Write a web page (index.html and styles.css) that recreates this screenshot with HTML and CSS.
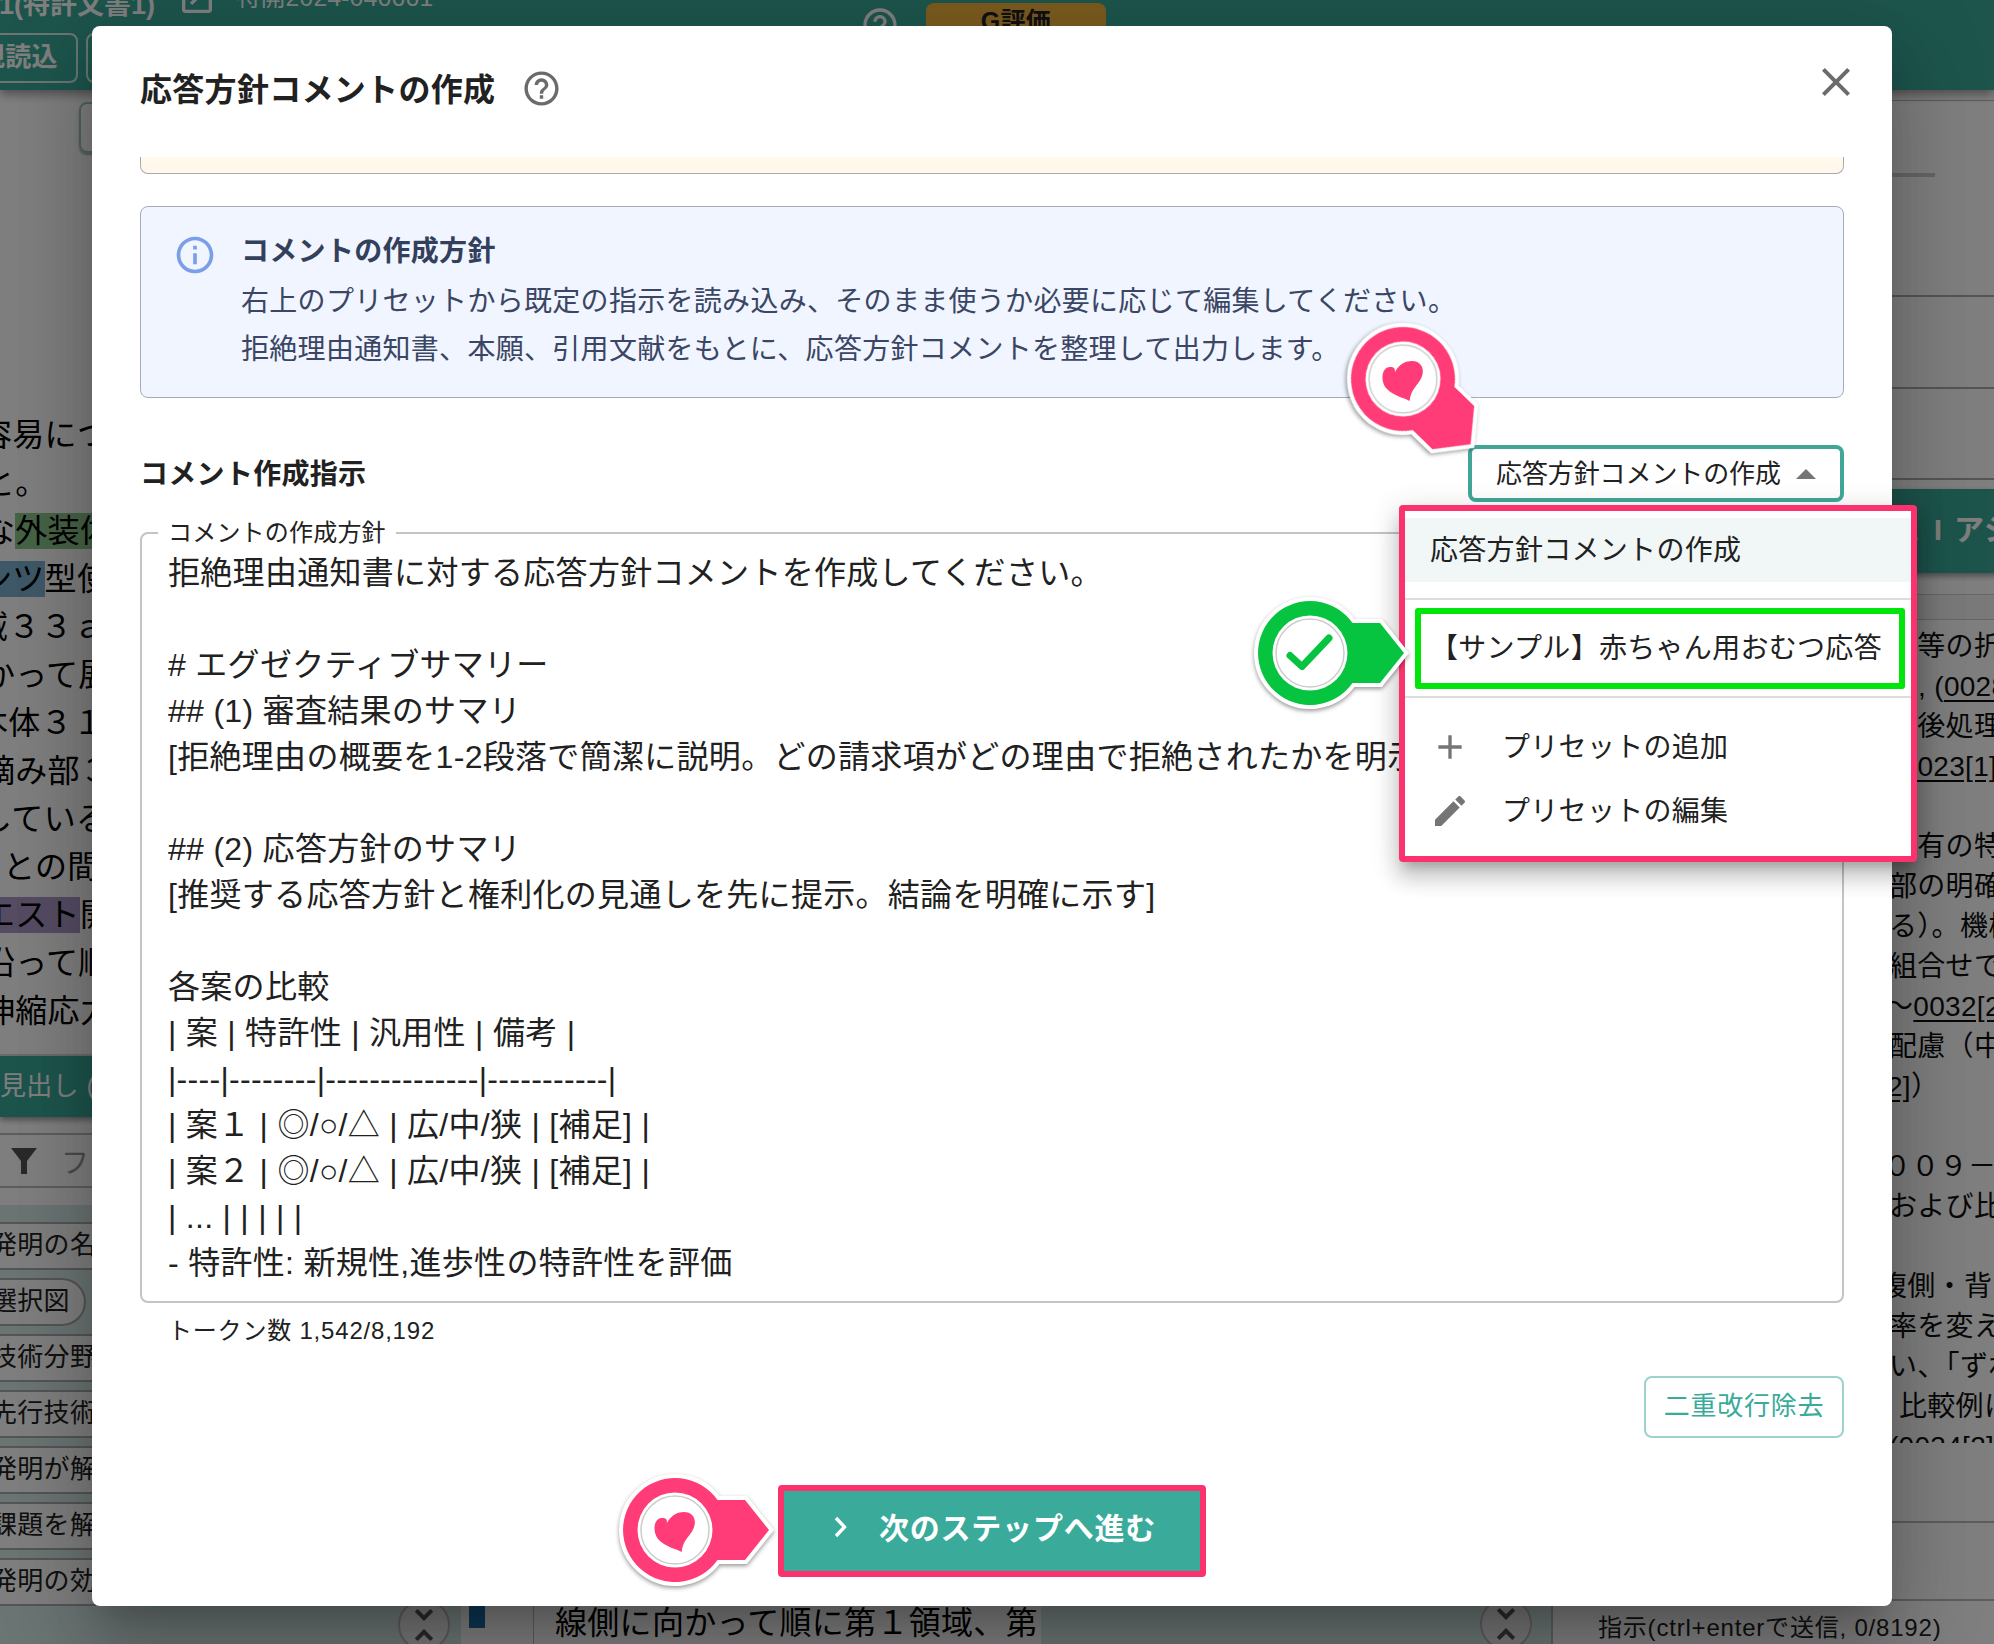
FILE: index.html
```html
<!DOCTYPE html>
<html lang="ja">
    <head>
        <meta charset="UTF-8" />
        <meta name="viewport" content="width=device-width, initial-scale=1.0" />
        <title>応答方針コメントの作成</title>
        <link rel="stylesheet" href="styles.css">
    </head>

    <body>
        <!-- アイコン・マーカーの定義 -->
        <svg class="defs" width="0" height="0">
            <symbol id="icon-help" viewBox="0 0 24 24">
                <path d="M11 18h2v-2h-2v2zm1-16C6.48 2 2 6.48 2 12s4.48 10 10 10 10-4.48 10-10S17.52 2 12 2zm0 18c-4.41 0-8-3.59-8-8s3.59-8 8-8 8 3.59 8 8-3.59 8-8 8zm0-14c-2.21 0-4 1.79-4 4h2c0-1.1.9-2 2-2s2 .9 2 2c0 2-3 1.75-3 5h2c0-2.25 3-2.5 3-5 0-2.21-1.79-4-4-4z" />
            </symbol>
            <symbol id="icon-unfold" viewBox="0 0 24 24">
                <path d="M7.41 18.59 8.83 20 12 16.83 15.17 20l1.41-1.41L12 14l-4.59 4.59zm9.18-13.18L15.17 4 12 7.17 8.83 4 7.41 5.41 12 10l4.59-4.59z" />
            </symbol>
            <symbol id="pin" viewBox="-60 -60 164 124">
                <path class="pin-edge" d="M42.500 -30H70L94 0L70 30H42.500A52 52 0 1 1 42.500 -30Z" />
                <path d="M42.500 -30H70L94 0L70 30H42.500A52 52 0 1 1 42.500 -30Z" />
                <circle class="pin-hole" r="37.500" />
                <circle class="pin-ring" r="34" />
            </symbol>
            <symbol id="heart" viewBox="-26 -26 52 52">
                <path d="M6.700 22C2 19 -10 17 -17 9C-23 1 -21 -12 -13 -12C-9 -12 -8 -11 -8 -7C-4 -15 3 -18 9 -18C17 -18 21 -12 19.600 -5C17 6 8 8 6.700 22Z" />
            </symbol>
        </svg>

        <div class="app">
            <div class="header">
                <div class="header-top">
                    <span class="doc-name">1(特許文書1)</span>
                    <svg class="open-icon" width="40" height="40" viewBox="0 0 24 24"><path d="M19 19H5V5h7V3H5a2 2 0 0 0-2 2v14c0 1.100.89 2 2 2h14c1.100 0 2-.9 2-2v-7h-2v7zM14 3v2h3.590l-9.830 9.830 1.410 1.410L19 6.410V10h2V3h-7z" /></svg>
                    <span class="doc-no">特開2024-046661</span>
                </div>
                <div class="header-bottom">
                    <span class="header-btn">規読込</span>
                    <span class="header-btn next"></span>
                </div>
                <svg class="header-help" width="40" height="40"><use href="#icon-help" /></svg>
                <span class="rating">G評価</span>
            </div>

            <div class="main">
                <div class="side">
                    <div class="side-tools"><span class="small-btn"></span></div>
                    <div class="reading">
                        <p>容易につ</p>
                        <p>と。</p>
                        <p>な<mark class="green">外装体</mark></p>
                        <p><mark class="blue">ンツ</mark>型使</p>
                        <p>域３３ａ</p>
                        <p>かって展</p>
                        <p>本体３１</p>
                        <p>摘み部３</p>
                        <p>している</p>
                        <p>との間</p>
                        <p><mark class="purple">エスト</mark>開</p>
                        <p>沿って順</p>
                        <p>伸縮応力</p>
                    </div>
                    <div class="side-title">見出し (</div>
                    <div class="filter">
                        <svg width="26" height="26" viewBox="0 0 26 26"><path d="M0 0H26L16 13V26H10V13Z" /></svg>
                        <span>フィルタ</span>
                    </div>
                    <div class="outline">
                        <span class="chip">発明の名称</span>
                        <span class="chip short">選択図</span>
                        <span class="chip">技術分野</span>
                        <span class="chip">先行技術文献</span>
                        <span class="chip">発明が解決</span>
                        <span class="chip">課題を解決</span>
                        <span class="chip">発明の効果</span>
                        <span class="fold"><svg width="52" height="52"><use href="#icon-unfold" /></svg></span>
                    </div>
                </div>
                <div class="document">
                    <div class="mark-rail"><i></i></div>
                    <div class="document-text">線側に向かって順に第１領域、第２</div>
                </div>
                <div class="figures">
                    <span class="fold"><svg width="52" height="52"><use href="#icon-unfold" /></svg></span>
                </div>
                <div class="assistant">
                    <div class="form-lines">
                        <i class="bar"></i>
                    </div>
                    <div class="assistant-title">Ａ<span>I</span>アシ</div>
                    <div class="assistant-tab"></div>
                    <div class="answer">
                        <p>部、前等</p>
                        <p>を等の折</p>
                        <p>], (<u>0028</u></p>
                        <p>の後処理</p>
                        <p>(<u>0023[1]</u></p>
                        <p></p>
                        <p>固有の特</p>
                        <p>部の明確</p>
                        <p>る）。機械</p>
                        <p>組合せで</p>
                        <p>〜<u>0032[2]</u></p>
                        <p>配慮（中</p>
                        <p><u>2]</u>）</p>
                        <p></p>
                        <p>００９－</p>
                        <p>および比</p>
                        <p></p>
                        <p>腹側・背</p>
                        <p>率を変え</p>
                        <p>い、「ずれ</p>
                        <p>比較例に</p>
                        <p>(0034[2]</p>
                    </div>
                    <div class="prompt"></div>
                    <div class="prompt-hint">指示(ctrl+enterで送信, 0/8192)</div>
                </div>
            </div>
        </div>

        <div class="backdrop">
            <div class="dialog">
                <div class="dialog-title">
                    <h2>応答方針コメントの作成</h2>
                    <svg class="help" width="41" height="41"><use href="#icon-help" /></svg>
                    <svg class="close" width="48" height="48" viewBox="0 0 24 24"><path d="M19 6.410 17.590 5 12 10.590 6.410 5 5 6.410 10.590 12 5 17.590 6.410 19 12 13.410 17.590 19 19 17.590 13.410 12z" /></svg>
                </div>
                <div class="dialog-content">
                    <div class="warning"></div>
                    <div class="info">
                        <svg width="44" height="44" viewBox="0 0 24 24"><path d="M11 7h2v2h-2zm0 4h2v6h-2zm1-9C6.480 2 2 6.480 2 12s4.480 10 10 10 10-4.480 10-10S17.520 2 12 2zm0 18c-4.410 0-8-3.590-8-8s3.590-8 8-8 8 3.590 8 8-3.590 8-8 8z" /></svg>
                        <div>
                            <h3>コメントの作成方針</h3>
                            <p>右上のプリセットから既定の指示を読み込み、そのまま使うか必要に応じて編集してください。</p>
                            <p>拒絶理由通知書、本願、引用文献をもとに、応答方針コメントを整理して出力します。</p>
                        </div>
                    </div>
                    <div class="field-head">
                        <h3>コメント作成指示</h3>
                        <div class="select">
                            <span>応答方針コメントの作成</span>
                            <i class="arrow"></i>
                        </div>
                    </div>
                    <fieldset class="editor">
                        <legend>コメントの作成方針</legend>
                        <div class="editor-text">拒絶理由通知書に対する応答方針コメントを作成してください。

# エグゼクティブサマリー
## (1) 審査結果のサマリ
[拒絶理由の概要を1-2段落で簡潔に説明。どの請求項がどの理由で拒絶されたかを明示]

## (2) 応答方針のサマリ
[推奨する応答方針と権利化の見通しを先に提示。結論を明確に示す]

各案の比較
| 案 | 特許性 | 汎用性 | 備考 |
|----|--------|--------------|-----------|
| 案１ | ◎/○/△ | 広/中/狭 | [補足] |
| 案２ | ◎/○/△ | 広/中/狭 | [補足] |
| ... | | | | |
- 特許性: 新規性,進歩性の特許性を評価</div>
                    </fieldset>
                    <div class="token">トークン数 1,542/8,192</div>
                    <div class="tools"><span class="outline-btn">二重改行除去</span></div>
                </div>
                <div class="dialog-actions">
                    <div class="next-btn">
                        <svg width="14" height="22" viewBox="0 0 14 22"><path d="M2 2L10.500 11L2 20" /></svg>
                        <span>次のステップへ進む</span>
                    </div>
                </div>
            </div>
        </div>

        <div class="menu">
            <div class="menu-item selected">応答方針コメントの作成</div>
            <div class="sample"><div class="menu-item">【サンプル】赤ちゃん用おむつ応答</div></div>
            <div class="menu-item with-icon">
                <svg width="40" height="40" viewBox="0 0 24 24"><path d="M19 13h-6v6h-2v-6H5v-2h6V5h2v6h6v2z" /></svg>
                <span>プリセットの追加</span>
            </div>
            <div class="menu-item with-icon">
                <svg width="40" height="40" viewBox="0 0 24 24"><path d="M3 17.250V21h3.750L17.810 9.940l-3.750-3.750L3 17.250zM20.710 7.040c.39-.39.39-1.020 0-1.410l-2.340-2.340c-.39-.39-1.020-.39-1.410 0l-1.830 1.830 3.750 3.750 1.830-1.830z" /></svg>
                <span>プリセットの編集</span>
            </div>
        </div>

        <div class="pin pin-select">
            <svg class="pin-body turned" width="164" height="124"><use href="#pin" /></svg>
            <svg class="pin-mark" width="52" height="52"><use href="#heart" /></svg>
        </div>
        <div class="pin pin-sample">
            <svg class="pin-body" width="164" height="124"><use href="#pin" /></svg>
            <svg class="pin-mark" width="52" height="52" viewBox="-26 -26 52 52"><path class="check" d="M-20 2.500L-8 13.500L19 -15" /></svg>
        </div>
        <div class="pin pin-next">
            <svg class="pin-body" width="164" height="124"><use href="#pin" /></svg>
            <svg class="pin-mark" width="52" height="52"><use href="#heart" /></svg>
        </div>
    </body>
</html>
```

FILE: styles.css
```css
* {
    padding: 0;
    margin: 0;
    box-sizing: border-box;
}

body {
    position: relative;
    width: 1994px;
    height: 1644px;
    overflow: hidden;
    font-family: "Liberation Sans", "Noto Sans CJK JP", sans-serif;
    font-size: 28px;
    letter-spacing: 0.3px;
    color: #212121;
    white-space: nowrap;
}

.defs {
    position: absolute;
}

p {
    min-height: 40px;
}

i {
    display: block;
}

/* ---------- 背面のアプリ ---------- */
.app {
    height: 1644px;
    background-color: #fff;
}

.header {
    position: relative;
    z-index: 1;
    height: 90px;
    background-color: #3aab9b;
    color: #fff;
    box-shadow: 0 4px 10px rgba(0, 0, 0, 0.4);
}

.header-top {
    display: flex;
    height: 33px;
}

.doc-name {
    width: 177px;
    margin-top: -15px;
    text-indent: -1px;
    line-height: 40px;
    font-size: 27px;
    font-weight: 700;
    letter-spacing: 0;
}

.open-icon {
    margin-top: -22px;
    fill: #fff;
}

.doc-no {
    margin: -22px 0 0 19px;
    line-height: 40px;
    font-size: 24.5px;
}

.header-bottom {
    display: flex;
    gap: 8px;
}

.header-btn {
    width: 86px;
    height: 50px;
    margin-left: -8px;
    border: 2px solid rgba(255, 255, 255, 0.8);
    border-radius: 8px;
    line-height: 45px;
    text-indent: -15px;
    font-size: 26px;
    font-weight: 700;
}

.header-btn.next {
    margin-left: 0;
}

.header-help {
    position: absolute;
    left: 860px;
    top: 5px;
    fill: #fff;
}

.rating {
    position: absolute;
    left: 926px;
    top: 3px;
    width: 180px;
    height: 50px;
    border-radius: 8px;
    background-color: #f6b640;
    color: #222;
    font-size: 25px;
    font-weight: 700;
    line-height: 36px;
    text-align: center;
}

.main {
    display: grid;
    grid-template-columns: 461px 580px 512px 1fr;
    height: 1554px;
}

.side {
    display: flex;
    flex-direction: column;
    overflow: hidden;
}

.side-tools {
    flex: none;
    height: 321px;
    padding: 12px 0 0 79px;
}

.small-btn {
    display: block;
    width: 120px;
    height: 51px;
    border: 2px solid #9fc9c3;
    border-radius: 8px;
    box-shadow: 0 2px 2px rgba(0, 0, 0, 0.3);
}

.reading {
    flex: none;
    height: 645px;
    border-bottom: 2px solid #e0e0e0;
    font-size: 32px;
    line-height: 48px;
    color: #000;
    text-indent: -17px;
}

.reading p:nth-child(1),
.reading p:nth-child(4),
.reading p:nth-child(9) {
    text-indent: -20px;
}

.reading p:nth-child(5),
.reading p:nth-child(7) {
    text-indent: -24px;
}

.reading p:nth-child(10) {
    text-indent: 3px;
}

mark {
    color: inherit;
}

.green {
    background-color: #8fc98f;
}

.blue {
    background-color: #7fb2d2;
}

.purple {
    background-color: #ad98c8;
}

.side-title {
    flex: none;
    height: 61px;
    background-color: #3aab9b;
    color: #fff;
    font-size: 26px;
    line-height: 60px;
    box-shadow: 0 3px 6px rgba(0, 0, 0, 0.4);
}

.filter {
    display: flex;
    flex: none;
    align-items: center;
    gap: 24px;
    height: 55px;
    margin: 16px 0 17px;
    padding-left: 11px;
    border: solid #bdbdbd;
    border-width: 2px 0;
    color: #999;
    fill: #555;
}

.outline {
    display: flex;
    flex: 1;
    flex-direction: column;
    gap: 8px;
    padding-top: 17px;
    background-color: #d7eae8;
}

.chip {
    flex: none;
    width: 300px;
    height: 48px;
    border: 2px solid #aaa;
    border-left: 0;
    background-color: #fff;
    color: #222;
    font-size: 26px;
    line-height: 43px;
    text-indent: -9px;
}

.chip.short {
    width: 86px;
    border-radius: 0 24px 24px 0;
}

.fold {
    display: flex;
    flex: none;
    align-items: center;
    justify-content: center;
    align-self: flex-end;
    width: 52px;
    height: 52px;
    margin: -13px 11px 0 0;
    border: 2px solid #bbb;
    border-radius: 50%;
    background-color: #eee;
    fill: #555;
}

.outline .fold {
    margin-top: -15px;
}

.document {
    display: flex;
    align-items: flex-end;
    height: 1554px;
    overflow: hidden;
}

.mark-rail {
    width: 73px;
    height: 46px;
    padding-left: 8px;
    border-right: 1px solid #bbb;
}

.mark-rail i {
    width: 16px;
    height: 30px;
    background-color: #1d6fa8;
}

.document-text {
    width: 507px;
    height: 46px;
    padding-left: 21px;
    overflow: hidden;
    color: #000;
    font-size: 32px;
    line-height: 51px;
}

.figures {
    display: flex;
    align-items: flex-end;
    justify-content: flex-end;
    height: 1554px;
    border-right: 2px solid #bbb;
    background-color: #d7eae8;
}

.figures .fold {
    margin: 0 19px -6px 0;
}

.assistant {
    display: flex;
    flex-direction: column;
    padding-left: 45px;
}

.form-lines {
    flex: none;
    height: 399px;
    padding-top: 83px;
    background: linear-gradient(#bbb, #bbb) 0 10px / 100% 1px no-repeat,
        linear-gradient(#aaa, #aaa) 0 205px / 100% 2px no-repeat,
        linear-gradient(#aaa, #aaa) 0 297px / 100% 2px no-repeat,
        linear-gradient(#aaa, #aaa) 0 388px / 100% 2px no-repeat;
}

.form-lines .bar {
    width: 337px;
    height: 4px;
    background-color: #ccc;
}

.assistant-title {
    flex: none;
    height: 84px;
    padding-left: 294px;
    background-color: #3aab9b;
    color: #fff;
    font-size: 30px;
    font-weight: 700;
    line-height: 82px;
    letter-spacing: 1px;
    box-shadow: 0 3px 6px rgba(0, 0, 0, 0.4);
}

.assistant-title span {
    display: inline-block;
    width: 31px;
    text-align: center;
}

.assistant-tab {
    flex: none;
    height: 26px;
    margin-top: 21px;
    border: solid #ccc;
    border-width: 1px 0;
    background-color: #f4f4f4;
}

.answer {
    flex: none;
    height: 823px;
    padding-left: 291px;
    overflow: hidden;
    line-height: 40px;
    color: #111;
}

.answer p:first-child {
    margin-top: -33px;
}

.answer p:nth-child(3) {
    margin-left: 21px;
}

.answer p:nth-child(5) {
    margin-left: 3px;
}

.answer p:nth-child(11) {
    margin-left: -4px;
}

.answer p:nth-child(13) {
    margin-left: -2px;
}

.answer p:nth-child(15) {
    margin-left: -6px;
}

.answer p:nth-child(18) {
    margin-left: -10px;
}

.answer p:nth-child(21) {
    margin-left: 10px;
}

u {
    text-underline-offset: 4px;
}

.prompt {
    flex: none;
    height: 80px;
    margin-top: 78px;
    border: solid #bbb;
    border-width: 2px 0;
}

.prompt-hint {
    line-height: 53px;
    font-size: 24px;
    letter-spacing: 0.8px;
    color: #222;
}

/* ---------- ダイアログ ---------- */
.backdrop {
    position: absolute;
    inset: 0;
    z-index: 2;
    padding: 26px 102px 38px 92px;
    background-color: rgba(0, 0, 0, 0.5);
}

.dialog {
    display: flex;
    flex-direction: column;
    height: 1580px;
    padding: 0 48px;
    border-radius: 8px;
    background-color: #fff;
    box-shadow: 0 22px 30px -14px rgba(0, 0, 0, 0.2),
        0 48px 76px 6px rgba(0, 0, 0, 0.14),
        0 18px 92px 16px rgba(0, 0, 0, 0.12);
}

.dialog-title {
    display: flex;
    align-items: center;
    height: 131px;
    padding-bottom: 6px;
    fill: #6b6b6b;
}

h2 {
    padding-top: 2px;
    font-size: 32px;
    line-height: 48px;
}

h3 {
    font-size: 28px;
    line-height: 48px;
}

.help {
    margin-left: 26px;
}

.close {
    margin: -13px -16px 0 auto;
}

.warning {
    height: 17px;
    border: 1px solid #aaa;
    border-top: 0;
    border-radius: 0 0 8px 8px;
    background-color: #fff8eb;
}

.info {
    display: flex;
    gap: 24px;
    height: 192px;
    margin-top: 32px;
    padding: 18px 32px;
    border: 1px solid #a6abb5;
    border-radius: 8px;
    background-color: #f0f5ff;
    color: #3a4663;
    line-height: 48px;
}

.info svg {
    margin-top: 8px;
    fill: #7a9fe8;
}

.info h3 {
    margin-bottom: 2px;
    padding-top: 3px;
    color: #33405c;
}

.field-head {
    display: flex;
    align-items: center;
    justify-content: space-between;
    height: 57px;
    margin-top: 47px;
}

.field-head h3 {
    padding-top: 2px;
}

.select {
    display: flex;
    align-items: center;
    justify-content: space-between;
    width: 376px;
    height: 57px;
    padding: 0 24px;
    border: 4px solid #41a698;
    border-radius: 8px;
    font-size: 26px;
    letter-spacing: -0.1px;
}

.select span {
    padding-bottom: 4px;
}

.arrow {
    border: 10px solid transparent;
    border-top: 0;
    border-bottom: 10px solid #757575;
}

.editor {
    height: 787px;
    margin-top: 14px;
    padding: 0 26px;
    border: 2px solid #c4c4c4;
    border-radius: 8px;
}

legend {
    margin-left: -10px;
    padding: 0 10px;
    font-size: 24px;
    line-height: 34px;
    letter-spacing: 0.2px;
}

.editor-text {
    overflow: hidden;
    white-space: pre;
    font-size: 32px;
    line-height: 46px;
}

.token {
    padding-left: 28px;
    margin-top: 8px;
    font-size: 24px;
    line-height: 40px;
    letter-spacing: 0.8px;
}

.tools {
    display: flex;
    justify-content: flex-end;
    margin-top: 25px;
}

.outline-btn {
    width: 200px;
    height: 62px;
    border: 2px solid #9cd3cb;
    border-radius: 8px;
    color: #3aab9b;
    font-size: 26px;
    line-height: 56px;
    letter-spacing: 0.74px;
    text-align: center;
}

.dialog-actions {
    display: flex;
    justify-content: center;
    margin-top: 47px;
}

.next-btn {
    display: flex;
    align-items: center;
    justify-content: center;
    gap: 31px;
    width: 428px;
    height: 92px;
    padding: 0 0 8px 6px;
    border: 6px solid #fb326d;
    border-radius: 4px;
    background-color: #3aab9b;
    color: #fff;
    font-size: 30px;
    font-weight: 700;
    letter-spacing: 0.8px;
}

.next-btn span {
    padding-bottom: 3px;
}

.next-btn path {
    fill: none;
    stroke: #fff;
    stroke-width: 3.4;
}

/* ---------- プリセットメニュー ---------- */
.menu {
    position: absolute;
    left: 1399px;
    top: 505px;
    z-index: 3;
    width: 518px;
    height: 357px;
    padding-top: 7px;
    border: 6px solid #fb326d;
    border-radius: 4px;
    background-color: #fff;
    box-shadow: 0 10px 10px -6px rgba(0, 0, 0, 0.2),
        0 16px 20px 2px rgba(0, 0, 0, 0.14),
        0 6px 28px 4px rgba(0, 0, 0, 0.12);
}

.menu-item {
    height: 64px;
    padding-left: 25px;
    line-height: 65px;
}

.selected {
    background-color: #f1f7f6;
}

.sample {
    height: 100px;
    margin: 16px 0 17px;
    padding: 8px 6px 7px 10px;
    border: solid #ddd;
    border-width: 2px 0;
}

.sample .menu-item {
    height: 81px;
    padding-left: 9px;
    border: 6px solid #00e60a;
    border-radius: 3px;
    line-height: 70px;
}

.with-icon {
    display: flex;
    align-items: center;
    gap: 32px;
    fill: #757575;
}

/* ---------- 注釈マーカー ---------- */
.pin {
    position: absolute;
    z-index: 4;
    width: 164px;
    height: 124px;
    fill: #ff3b78;
}

.pin-select {
    left: 1343px;
    top: 319px;
}

.pin-sample {
    left: 1250px;
    top: 593px;
    fill: #06c440;
}

.pin-next {
    left: 615px;
    top: 1470px;
}

.pin-body {
    display: block;
    overflow: visible;
    filter: drop-shadow(0 2px 2px rgba(0, 0, 0, 0.4));
}

.turned {
    transform: rotate(44deg);
    transform-origin: 60px 60px;
}

.pin-edge {
    fill: #fff;
    stroke: #fff;
    stroke-width: 8;
}

.pin-hole {
    fill: #fff;
}

.pin-ring {
    fill: none;
    stroke: #ccc;
    stroke-width: 1.5;
}

.pin-mark {
    position: absolute;
    left: 34px;
    top: 34px;
}

.check {
    fill: none;
    stroke: #06c440;
    stroke-width: 7;
    stroke-linecap: round;
    stroke-linejoin: round;
}
```
